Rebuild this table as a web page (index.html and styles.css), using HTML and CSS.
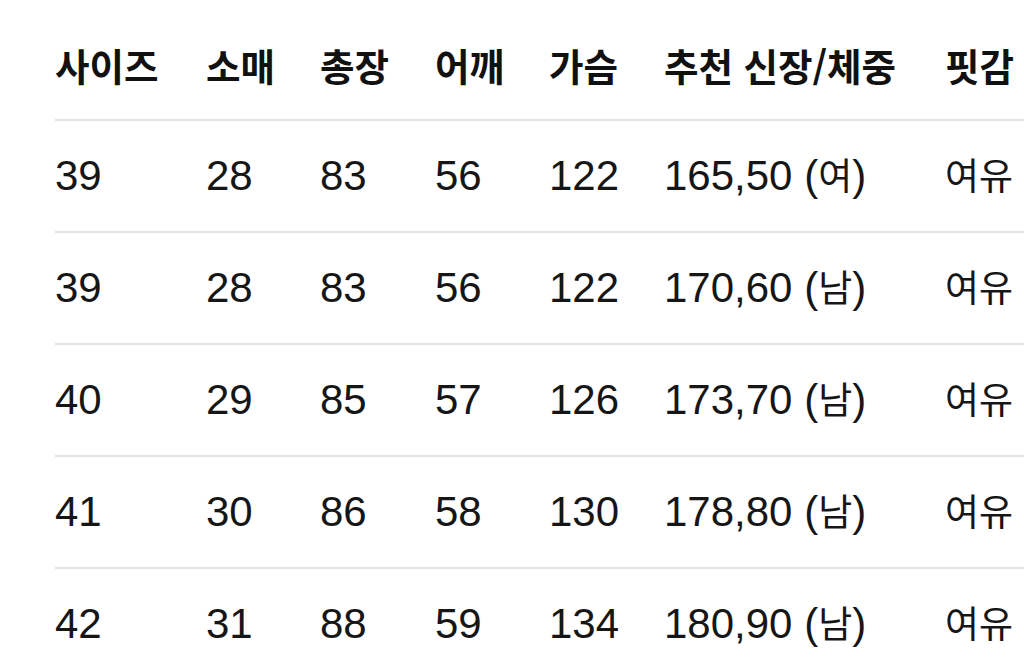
FILE: index.html
```html
<!DOCTYPE html>
<html lang="ko">
<head>
<meta charset="utf-8">
<link rel="stylesheet" href="styles.css">
</head>
<body>
<div class="table">
  <div class="row head">
    <div>사이즈</div><div>소매</div><div>총장</div><div>어깨</div><div>가슴</div><div>추천 신장/체중</div><div>핏감</div>
  </div>
  <div class="row">
    <div>39</div><div>28</div><div>83</div><div>56</div><div>122</div><div>165,50 (<span class="ko">여</span>)</div><div><span class="ko">여유</span></div>
  </div>
  <div class="row">
    <div>39</div><div>28</div><div>83</div><div>56</div><div>122</div><div>170,60 (<span class="ko">남</span>)</div><div><span class="ko">여유</span></div>
  </div>
  <div class="row">
    <div>40</div><div>29</div><div>85</div><div>57</div><div>126</div><div>173,70 (<span class="ko">남</span>)</div><div><span class="ko">여유</span></div>
  </div>
  <div class="row">
    <div>41</div><div>30</div><div>86</div><div>58</div><div>130</div><div>178,80 (<span class="ko">남</span>)</div><div><span class="ko">여유</span></div>
  </div>
  <div class="row">
    <div>42</div><div>31</div><div>88</div><div>59</div><div>134</div><div>180,90 (<span class="ko">남</span>)</div><div><span class="ko">여유</span></div>
  </div>
</div>
</body>
</html>
```
FILE: styles.css
```css
html, body {
  margin: 0;
  padding: 0;
  background: #ffffff;
  overflow: hidden;
  width: 1024px;
  height: 665px;
}
body {
  font-family: "Liberation Sans", "Noto Sans CJK KR", sans-serif;
  color: #161616;
}
.table {
  margin-left: 55px;
  padding-top: 9px;
  width: 969px;
}
.row {
  display: grid;
  grid-template-columns: 151px 114px 115px 114px 115px 281px 1fr;
  height: 110px;
  border-bottom: 2px solid #e3e3e3;
  align-items: center;
  font-size: 42px;
  white-space: nowrap;
}
.row > div {
  line-height: 1.2;
}
.head {
  font-family: "Noto Sans CJK KR", sans-serif;
  font-weight: 700;
  font-size: 37.5px;
  color: #111111;
}
.ko {
  font-family: "Noto Sans CJK KR", sans-serif;
  font-size: 0.88em;
}
```
